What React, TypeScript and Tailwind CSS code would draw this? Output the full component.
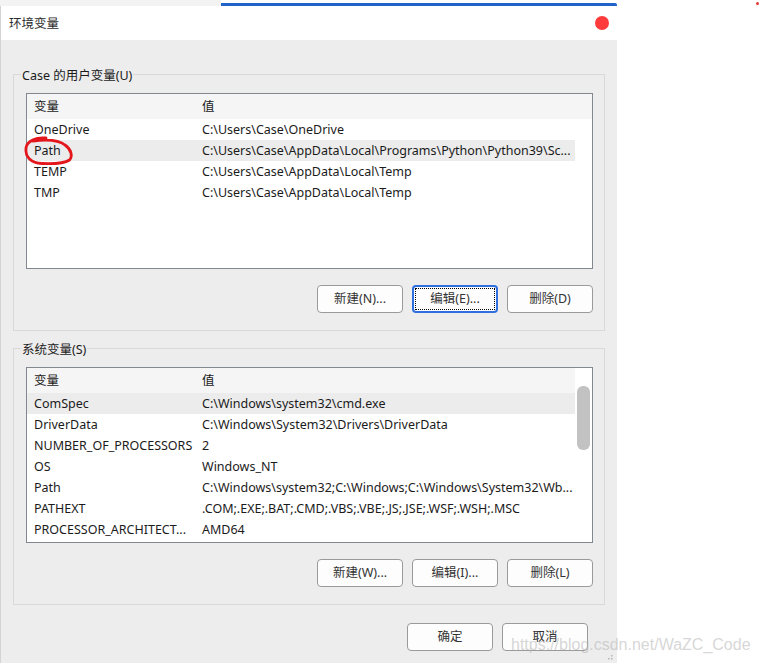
import React from "react";

const font = { fontFamily: '"Noto Sans", "Noto Sans CJK SC", sans-serif' };

type Row = { name: string; value: string; selected?: boolean };

const userVars: Row[] = [
  { name: "OneDrive", value: "C:\\Users\\Case\\OneDrive" },
  {
    name: "Path",
    value: "C:\\Users\\Case\\AppData\\Local\\Programs\\Python\\Python39\\Sc...",
    selected: true,
  },
  { name: "TEMP", value: "C:\\Users\\Case\\AppData\\Local\\Temp" },
  { name: "TMP", value: "C:\\Users\\Case\\AppData\\Local\\Temp" },
];

const systemVars: Row[] = [
  { name: "ComSpec", value: "C:\\Windows\\system32\\cmd.exe", selected: true },
  { name: "DriverData", value: "C:\\Windows\\System32\\Drivers\\DriverData" },
  { name: "NUMBER_OF_PROCESSORS", value: "2" },
  { name: "OS", value: "Windows_NT" },
  {
    name: "Path",
    value: "C:\\Windows\\system32;C:\\Windows;C:\\Windows\\System32\\Wb...",
  },
  { name: "PATHEXT", value: ".COM;.EXE;.BAT;.CMD;.VBS;.VBE;.JS;.JSE;.WSF;.WSH;.MSC" },
  { name: "PROCESSOR_ARCHITECT...", value: "AMD64" },
];

function Button({ label, focused }: { label: string; focused?: boolean }) {
  if (focused) {
    return (
      <div className="relative w-[86px] h-[28px] pt-[1px] rounded-[4px] border-2 border-[#2f6fe0] bg-[#fdfdfd] flex items-center justify-center text-[12.5px] text-[#333]">
        <span className="absolute inset-[1px] border border-dotted border-black" />
        {label}
      </div>
    );
  }
  return (
    <div className="w-[86px] h-[28px] pt-[1px] rounded-[4px] border border-[#9a9a9a] bg-[#fdfdfd] flex items-center justify-center text-[12.5px] text-[#333]">
      {label}
    </div>
  );
}

function RowLine({ row }: { row: Row }) {
  return (
    <div
      className={
        "flex h-[21px] pt-[2px] items-center whitespace-nowrap " +
        (row.selected ? "bg-[#ececec]" : "")
      }
    >
      <div className="w-[168px] pl-[7px] overflow-hidden">{row.name}</div>
      <div className="flex-1 pl-[7px] overflow-hidden">{row.value}</div>
    </div>
  );
}

function VarList({ rows, scroll }: { rows: Row[]; scroll?: boolean }) {
  return (
    <div className="h-[176px] border border-[#828790] bg-white flex overflow-hidden text-[12.5px] text-[#1b1b1b]">
      <div className="flex-1">
        <div className={"flex h-[25px] pt-[2px] items-center bg-[#f5f5f5] " + (scroll ? "w-[548px]" : "")}>
          <div className="w-[168px] pl-[7px]">变量</div>
          <div className="flex-1 pl-[7px]">值</div>
        </div>
        <div className="w-[548px]">
          {rows.map((r) => (
            <RowLine key={r.name} row={r} />
          ))}
        </div>
      </div>
      {scroll && (
        <div className="w-[17px] shrink-0 pl-[2px]">
          <div className="mt-[18px] h-[64px] w-[13px] rounded-[6px] bg-[#c2c2c2]" />
        </div>
      )}
    </div>
  );
}

function Group({
  title,
  rows,
  buttons,
  focusIndex,
  scroll,
}: {
  title: string;
  rows: Row[];
  buttons: string[];
  focusIndex?: number;
  scroll?: boolean;
}) {
  return (
    <div className="relative h-[257px] border border-[#d9d9d9] pt-[18px] pl-[12px] pr-[11px] pb-[17px]">
      <span className="absolute left-[7px] -top-[7px] px-[1px] bg-[#ededed] text-[12.5px] leading-[16px] text-[#1b1b1b]">
        {title}
      </span>
      <VarList rows={rows} scroll={scroll} />
      <div className="mt-[16px] flex justify-end gap-[9px]">
        {buttons.map((b, i) => (
          <Button key={b} label={b} focused={i === focusIndex} />
        ))}
      </div>
    </div>
  );
}

export default function App() {
  return (
    <div className="relative w-[760px] h-[663px] bg-white overflow-hidden" style={font}>
      {/* window behind */}
      <div className="flex h-[6px]">
        <div className="w-[221px] bg-[#f3f3f3]" />
        <div className="w-[396px] mt-[3px] h-[3px] bg-[#1f63c8] rounded-tr-[2px]" />
      </div>
      <span className="absolute left-[756px] top-[2px] w-[3px] h-[3px] rounded-full bg-[#e53935]" />

      {/* dialog */}
      <div className="w-[617px] h-[657px] flex flex-col border-l border-[#d4d4d4]">
        <div className="h-[34px] bg-white flex items-center justify-between pl-[8px] pr-[8px]">
          <span className="mt-[3px] text-[12.5px] text-[#2b2b2b]">环境变量</span>
          <span className="w-[14px] h-[14px] rounded-full bg-[#ff3b3b]" />
        </div>
        <div className="flex-1 bg-[#ededed] px-[12px]">
          <div className="mt-[34px]">
            <Group
              title="Case 的用户变量(U)"
              rows={userVars}
              buttons={["新建(N)...", "编辑(E)...", "删除(D)"]}
              focusIndex={1}
            />
          </div>
          <div className="mt-[17px]">
            <Group
              title="系统变量(S)"
              rows={systemVars}
              buttons={["新建(W)...", "编辑(I)...", "删除(L)"]}
              scroll
            />
          </div>
          <div className="mt-[18px] flex justify-end gap-[9px] pr-[17px]">
            <Button label="确定" />
            <Button label="取消" />
          </div>
        </div>
      </div>

      {/* red annotation around Path */}
      <svg
        className="absolute left-0 top-0 pointer-events-none"
        width="760"
        height="663"
        viewBox="0 0 760 663"
      >
        <path
          d="M46 138 C36 137 27 141 26 148 C25 157 31 163 42 163.5 C54 164 65 163 69.5 160 C73 156 71 149 65 145 C59 140 49 139 33 141"
          fill="none"
          stroke="#e3161c"
          strokeWidth="2.8"
          strokeLinecap="round"
        />
        <g fill="#b5b5b5">
          <rect x="611" y="655" width="1.5" height="1.5" />
          <rect x="608" y="658" width="1.5" height="1.5" />
          <rect x="611" y="658" width="1.5" height="1.5" />
        </g>
      </svg>

      {/* watermark */}
      <span
        className="absolute left-[511px] top-[636px] text-[16px] leading-[18px] text-[rgba(180,180,180,0.55)] whitespace-nowrap"
        style={{ fontFamily: '"Liberation Sans", Arial, sans-serif' }}
      >
        https://blog.csdn.net/WaZC_Code
      </span>
    </div>
  );
}
